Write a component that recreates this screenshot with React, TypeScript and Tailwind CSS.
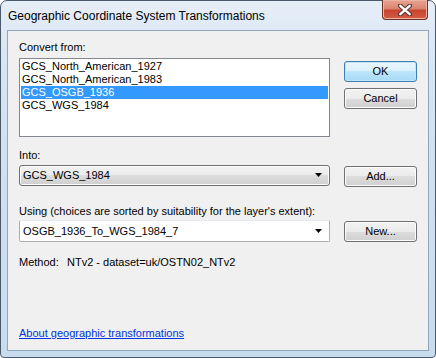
import React from 'react';

const items = ['GCS_North_American_1927', 'GCS_North_American_1983', 'GCS_OSGB_1936', 'GCS_WGS_1984'];

function WinButton({ label, primary }: { label: string; primary?: boolean }) {
  return (
    <div
      className={
        'w-[73px] h-[21px] rounded-[3px] border flex items-center justify-center text-[11px] text-black ' +
        (primary
          ? 'border-[#3c7fb1] bg-[linear-gradient(#eaf6fd_0%,#d9f0fc_50%,#bee6fd_50%,#a7d9f5_100%)] shadow-[inset_0_0_0_1px_#c2e4f6]'
          : 'border-[#707070] bg-[linear-gradient(#f2f2f2_0%,#ebebeb_50%,#dddddd_50%,#cfcfcf_100%)] shadow-[inset_0_0_0_1px_#fcfcfc]')
      }
    >
      {label}
    </div>
  );
}

function Arrow() {
  return (
    <svg width="8" height="5" viewBox="0 0 8 5" className="mr-[4px]">
      <path d="M0 0 H7 L3.5 4 Z" fill="#000" />
    </svg>
  );
}

export default function App() {
  return (
    <div className="w-[436px] h-[358px] font-['Liberation_Sans',sans-serif] text-[11px] text-black bg-white">
      <div className="w-[436px] h-[358px] rounded-t-[7px] rounded-b-[4px] border border-[#4a5a6c] bg-[linear-gradient(180deg,#e6eef8_0%,#d6e4f3_20%,#c9dbef_100%)] flex flex-col">
        {/* title bar */}
        <div className="h-[29px] flex items-start pl-[7px] pr-[7px]">
          <div className="flex-1 pt-[7px] text-[12px] leading-[16px] text-black">
            Geographic Coordinate System Transformations
          </div>
          <div className="w-[46px] h-[20px] -mt-[1px] rounded-b-[4px] border border-[#6d2f26] border-t-0 bg-[linear-gradient(#e8a493_0%,#d88570_45%,#c8452f_55%,#d45c44_100%)] shadow-[inset_0_0_0_1px_#eeb3a4] flex items-center justify-center">
            <svg width="14" height="12" viewBox="0 0 14 12">
              <path d="M2 1.5 L12 10.5 M12 1.5 L2 10.5" stroke="#5a3a35" strokeWidth="4.4" strokeLinecap="round" />
              <path d="M2.3 1.8 L11.7 10.2 M11.7 1.8 L2.3 10.2" stroke="#ffffff" strokeWidth="2.4" strokeLinecap="round" />
            </svg>
          </div>
        </div>
        {/* content */}
        <div className="mx-[6px] h-[321px] border border-[#8fa6bf] bg-[#f0f0f0] pl-[11px] pt-[8px] flex flex-col">
          <div className="leading-[16px] h-[16px]">Convert from:</div>
          <div className="mt-[3px] flex items-start gap-[14px]">
            <div className="w-[311px] h-[79px] border border-[#828790] bg-white p-[1px]">
              {items.map((it, i) => (
                <div
                  key={it}
                  className={
                    'h-[13px] leading-[13px] pl-[1px] ' + (i === 2 ? 'bg-[#3399ff] text-white' : 'text-black')
                  }
                >
                  {it}
                </div>
              ))}
            </div>
            <div className="flex flex-col gap-[6px] mt-[3px]">
              <WinButton label="OK" primary />
              <WinButton label="Cancel" />
            </div>
          </div>

          <div className="mt-[10px] leading-[16px] h-[16px]">Into:</div>
          <div className="mt-[2px] flex items-start gap-[14px]">
            <div className="w-[311px] h-[21px] rounded-[3px] border border-[#707070] bg-[linear-gradient(#f2f2f2_0%,#ebebeb_50%,#dddddd_50%,#cfcfcf_100%)] shadow-[inset_0_0_0_1px_#fcfcfc] flex items-center justify-between pl-[3px] pr-[2px]">
              <span>GCS_WGS_1984</span>
              <Arrow />
            </div>
            <div className="mt-[1px]">
              <WinButton label="Add..." />
            </div>
          </div>

          <div className="mt-[16px] leading-[16px] h-[16px]">
            Using (choices are sorted by suitability for the layer's extent):
          </div>
          <div className="mt-[1px] flex items-start gap-[14px]">
            <div className="w-[311px] h-[22px] rounded-[2px] border border-[#abadb3] border-t-[#e3e9ef] bg-white flex items-center justify-between pl-[3px] pr-[2px]">
              <span>OSGB_1936_To_WGS_1984_7</span>
              <Arrow />
            </div>
            <div className="mt-[1px]">
              <WinButton label="New..." />
            </div>
          </div>

          <div className="mt-[12px] leading-[16px] h-[16px] flex">
            <span className="w-[48px]">Method:</span>
            <span>NTv2 - dataset=uk/OSTN02_NTv2</span>
          </div>

          <div className="mt-auto mb-[9px] leading-[16px] h-[16px]">
            <span className="text-[#0033dd] underline">About geographic transformations</span>
          </div>
        </div>
        <div className="flex-1" />
      </div>
    </div>
  );
}
